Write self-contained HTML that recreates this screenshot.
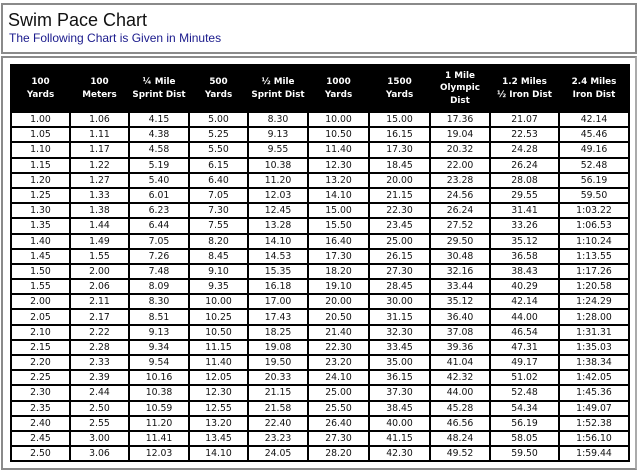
<!DOCTYPE html>
<html><head><style>
body{margin:0;width:640px;height:452px;overflow:hidden;background:#fff;font-family:"DejaVu Sans",Verdana,sans-serif;position:relative}
.box1{position:absolute;left:1px;top:3px;width:632px;height:47px;border:2px solid #8a8a8a}
.box2{position:absolute;left:1px;top:56px;width:632px;height:410px;border:2px solid #8a8a8a;border-right-color:#aaa}
h1{position:absolute;left:8px;top:10px;margin:0;font:18px "Liberation Sans",Arial,sans-serif;color:#111}
.sub{position:absolute;left:9px;top:31px;font:12px "Liberation Sans",Arial,sans-serif;color:#1a1a8c}
table{position:absolute;left:10px;top:64px;width:618px;background:#000;border-spacing:2px;table-layout:fixed;border-collapse:separate;padding:0 0 0 0}
th{color:#fff;font-weight:bold;font-size:8.8px;line-height:12.5px;height:45px;padding:0;text-align:center}
td{background:#fff;height:13.2px;padding:0;font-size:9.3px;line-height:13px;text-align:center;color:#111}
</style></head><body>
<div class="box1"></div>
<h1>Swim Pace Chart</h1>
<div class="sub">The Following Chart is Given in Minutes</div>
<div class="box2"></div>
<table>
<colgroup><col style="width:57px"><col style="width:57px"><col style="width:58px"><col style="width:57px"><col style="width:58px"><col style="width:59px"><col style="width:59px"><col style="width:58px"><col style="width:67px"><col style="width:68px"></colgroup>
<tr><th>100<br>Yards</th><th>100<br>Meters</th><th>¼ Mile<br>Sprint Dist</th><th>500<br>Yards</th><th>½ Mile<br>Sprint Dist</th><th>1000<br>Yards</th><th>1500<br>Yards</th><th>1 Mile<br>Olympic<br>Dist</th><th>1.2 Miles<br>½ Iron Dist</th><th>2.4 Miles<br>Iron Dist</th></tr>
<tr><td>1.00</td><td>1.06</td><td>4.15</td><td>5.00</td><td>8.30</td><td>10.00</td><td>15.00</td><td>17.36</td><td>21.07</td><td>42.14</td></tr>
<tr><td>1.05</td><td>1.11</td><td>4.38</td><td>5.25</td><td>9.13</td><td>10.50</td><td>16.15</td><td>19.04</td><td>22.53</td><td>45.46</td></tr>
<tr><td>1.10</td><td>1.17</td><td>4.58</td><td>5.50</td><td>9.55</td><td>11.40</td><td>17.30</td><td>20.32</td><td>24.28</td><td>49.16</td></tr>
<tr><td>1.15</td><td>1.22</td><td>5.19</td><td>6.15</td><td>10.38</td><td>12.30</td><td>18.45</td><td>22.00</td><td>26.24</td><td>52.48</td></tr>
<tr><td>1.20</td><td>1.27</td><td>5.40</td><td>6.40</td><td>11.20</td><td>13.20</td><td>20.00</td><td>23.28</td><td>28.08</td><td>56.19</td></tr>
<tr><td>1.25</td><td>1.33</td><td>6.01</td><td>7.05</td><td>12.03</td><td>14.10</td><td>21.15</td><td>24.56</td><td>29.55</td><td>59.50</td></tr>
<tr><td>1.30</td><td>1.38</td><td>6.23</td><td>7.30</td><td>12.45</td><td>15.00</td><td>22.30</td><td>26.24</td><td>31.41</td><td>1:03.22</td></tr>
<tr><td>1.35</td><td>1.44</td><td>6.44</td><td>7.55</td><td>13.28</td><td>15.50</td><td>23.45</td><td>27.52</td><td>33.26</td><td>1:06.53</td></tr>
<tr><td>1.40</td><td>1.49</td><td>7.05</td><td>8.20</td><td>14.10</td><td>16.40</td><td>25.00</td><td>29.50</td><td>35.12</td><td>1:10.24</td></tr>
<tr><td>1.45</td><td>1.55</td><td>7.26</td><td>8.45</td><td>14.53</td><td>17.30</td><td>26.15</td><td>30.48</td><td>36.58</td><td>1:13.55</td></tr>
<tr><td>1.50</td><td>2.00</td><td>7.48</td><td>9.10</td><td>15.35</td><td>18.20</td><td>27.30</td><td>32.16</td><td>38.43</td><td>1:17.26</td></tr>
<tr><td>1.55</td><td>2.06</td><td>8.09</td><td>9.35</td><td>16.18</td><td>19.10</td><td>28.45</td><td>33.44</td><td>40.29</td><td>1:20.58</td></tr>
<tr><td>2.00</td><td>2.11</td><td>8.30</td><td>10.00</td><td>17.00</td><td>20.00</td><td>30.00</td><td>35.12</td><td>42.14</td><td>1:24.29</td></tr>
<tr><td>2.05</td><td>2.17</td><td>8.51</td><td>10.25</td><td>17.43</td><td>20.50</td><td>31.15</td><td>36.40</td><td>44.00</td><td>1:28.00</td></tr>
<tr><td>2.10</td><td>2.22</td><td>9.13</td><td>10.50</td><td>18.25</td><td>21.40</td><td>32.30</td><td>37.08</td><td>46.54</td><td>1:31.31</td></tr>
<tr><td>2.15</td><td>2.28</td><td>9.34</td><td>11.15</td><td>19.08</td><td>22.30</td><td>33.45</td><td>39.36</td><td>47.31</td><td>1:35.03</td></tr>
<tr><td>2.20</td><td>2.33</td><td>9.54</td><td>11.40</td><td>19.50</td><td>23.20</td><td>35.00</td><td>41.04</td><td>49.17</td><td>1:38.34</td></tr>
<tr><td>2.25</td><td>2.39</td><td>10.16</td><td>12.05</td><td>20.33</td><td>24.10</td><td>36.15</td><td>42.32</td><td>51.02</td><td>1:42.05</td></tr>
<tr><td>2.30</td><td>2.44</td><td>10.38</td><td>12.30</td><td>21.15</td><td>25.00</td><td>37.30</td><td>44.00</td><td>52.48</td><td>1:45.36</td></tr>
<tr><td>2.35</td><td>2.50</td><td>10.59</td><td>12.55</td><td>21.58</td><td>25.50</td><td>38.45</td><td>45.28</td><td>54.34</td><td>1:49.07</td></tr>
<tr><td>2.40</td><td>2.55</td><td>11.20</td><td>13.20</td><td>22.40</td><td>26.40</td><td>40.00</td><td>46.56</td><td>56.19</td><td>1:52.38</td></tr>
<tr><td>2.45</td><td>3.00</td><td>11.41</td><td>13.45</td><td>23.23</td><td>27.30</td><td>41.15</td><td>48.24</td><td>58.05</td><td>1:56.10</td></tr>
<tr><td>2.50</td><td>3.06</td><td>12.03</td><td>14.10</td><td>24.05</td><td>28.20</td><td>42.30</td><td>49.52</td><td>59.50</td><td>1:59.44</td></tr>
</table>
</body></html>
